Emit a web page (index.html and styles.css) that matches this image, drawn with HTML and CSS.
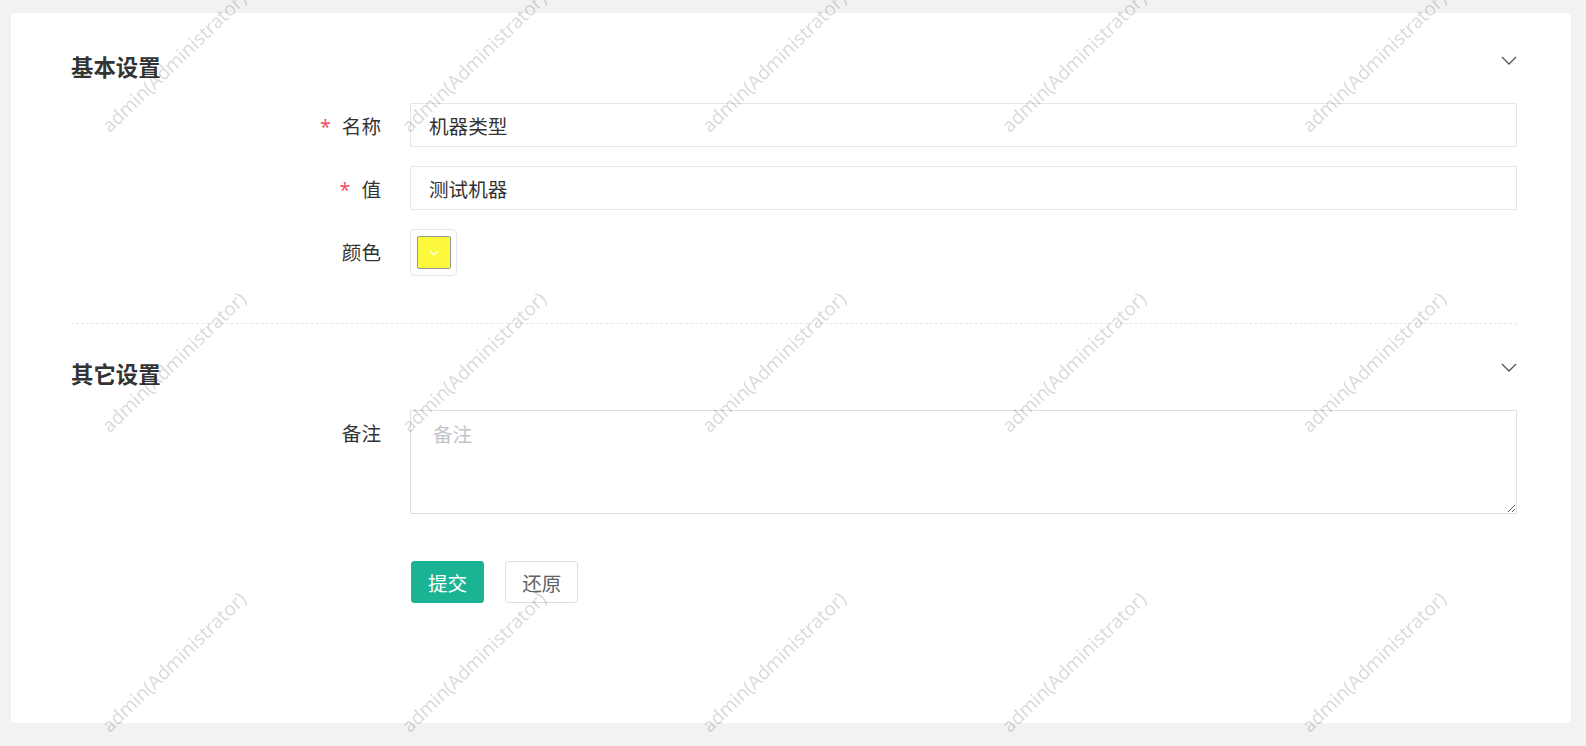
FILE: index.html
```html
<!DOCTYPE html>
<html lang="zh-CN">

<head>
    <meta charset="utf-8">
    <meta name="viewport" content="width=device-width, initial-scale=1.0">
    <title>字典数据</title>
    <link rel="stylesheet" href="styles.css">
</head>

<body>
    <div class="card">
        <div class="section">
            <div class="section-head">
                <h3>基本设置</h3>
                <svg class="toggle" width="16" height="9" viewBox="0 0 16 9"><polyline points="1,1 8,8 15,1" /></svg>
            </div>
            <div class="row">
                <label class="label"><span class="star">*</span>名称</label>
                <input type="text" class="input" value="机器类型">
            </div>
            <div class="row">
                <label class="label"><span class="star">*</span>值</label>
                <input type="text" class="input" value="测试机器">
            </div>
            <div class="row">
                <label class="label">颜色</label>
                <div class="picker">
                    <div class="swatch">
                        <svg width="10" height="6" viewBox="0 0 10 6"><polyline points="1,1 5,5 9,1" /></svg>
                    </div>
                </div>
            </div>
        </div>

        <div class="section">
            <div class="section-head">
                <h3>其它设置</h3>
                <svg class="toggle" width="16" height="9" viewBox="0 0 16 9"><polyline points="1,1 8,8 15,1" /></svg>
            </div>
            <div class="row">
                <label class="label">备注</label>
                <textarea class="input area" placeholder="备注"></textarea>
            </div>
            <div class="actions">
                <button class="btn primary">提交</button>
                <button class="btn">还原</button>
            </div>
        </div>
    </div>

    <!-- watermark layer -->
    <div class="watermark">
        <div class="wm-grid" id="wm"></div>
    </div>

    <script>
        let wm = document.getElementById('wm');
        let str = "";
        for (let i = 0; i < 15; i++) {
            str += `<div class="wm-cell"><span>admin(Administrator)</span></div>`;
        }
        wm.innerHTML = str;
    </script>
</body>

</html>
```

FILE: styles.css
```css
body {
    margin: 0;
    padding: 13px 15px 23px 11px;
    background-color: #f2f2f2;
    font-family: "Noto Sans", "Noto Sans CJK SC", sans-serif;
    color: #333;
    font-size: 19.6px;
}

.card {
    background-color: #fff;
    border-radius: 5px;
    height: 710px;
    box-sizing: border-box;
    padding: 40px 54px 0 60px;
}

.section {
    padding-bottom: 28px;
}

.section + .section {
    border-top: 1px dashed #e6e6e6;
    padding-top: 36px;
}

.section-head {
    display: flex;
    justify-content: space-between;
    margin-bottom: 20px;
}

.section-head h3 {
    margin: 0;
    font-size: 22.4px;
    line-height: 30px;
    font-weight: bold;
    color: #333;
}

.toggle {
    margin-top: 3px;
    fill: none;
    stroke: #555;
    stroke-width: 1.3;
}

.row {
    display: flex;
    align-items: flex-start;
    margin-bottom: 19px;
}

.label {
    width: 339px;
    flex-shrink: 0;
    box-sizing: border-box;
    padding: 4px 29px 0 0;
    text-align: right;
    line-height: 40px;
    color: #333;
}

.star {
    color: #ed5565;
    margin-right: 11px;
}

.input {
    flex: 1;
    height: 44px;
    box-sizing: border-box;
    border: 1px solid #e5e6e7;
    border-radius: 1px;
    padding: 0 18px;
    font-family: inherit;
    font-size: 19.6px;
    color: #333;
    outline: none;
}

.area {
    height: 104px;
    padding: 8px 22px;
    border-color: #dcdfe6;
    resize: vertical;
}

.area::placeholder {
    color: #c0c4cc;
}

.picker {
    width: 47px;
    height: 47px;
    box-sizing: border-box;
    border: 1px solid #e6e6e6;
    border-radius: 4px;
    display: flex;
    align-items: center;
    justify-content: center;
}

.swatch {
    width: 34px;
    height: 33px;
    box-sizing: border-box;
    border: 1px solid #999;
    border-radius: 2px;
    background-color: #fcf93c;
    display: flex;
    align-items: center;
    justify-content: center;
}

.swatch svg {
    fill: none;
    stroke: #fff;
    stroke-width: 1.2;
}

.actions {
    padding-left: 340px;
    margin-top: 47px;
    display: flex;
    gap: 21px;
}

.btn {
    height: 42px;
    padding: 0 16px;
    font-family: inherit;
    font-size: 19.6px;
    background-color: #fff;
    color: #606266;
    border: 1px solid #dcdfe6;
    border-radius: 3px;
    cursor: pointer;
}

.btn.primary {
    background-color: #1ab394;
    border-color: #1ab394;
    color: #fff;
}

.watermark {
    position: fixed;
    top: 0;
    left: 0;
    right: 0;
    bottom: 0;
    overflow: hidden;
    pointer-events: none;
}

.wm-grid {
    position: absolute;
    left: 24px;
    top: -88px;
    display: grid;
    grid-template-columns: repeat(5, 300px);
    grid-auto-rows: 300px;
}

.wm-cell {
    display: flex;
    align-items: center;
    justify-content: center;
}

.wm-cell span {
    transform: rotate(-44deg);
    white-space: nowrap;
    font-family: "Noto Sans", sans-serif;
    font-size: 19px;
    color: rgba(0, 0, 0, 0.15);
}
```
